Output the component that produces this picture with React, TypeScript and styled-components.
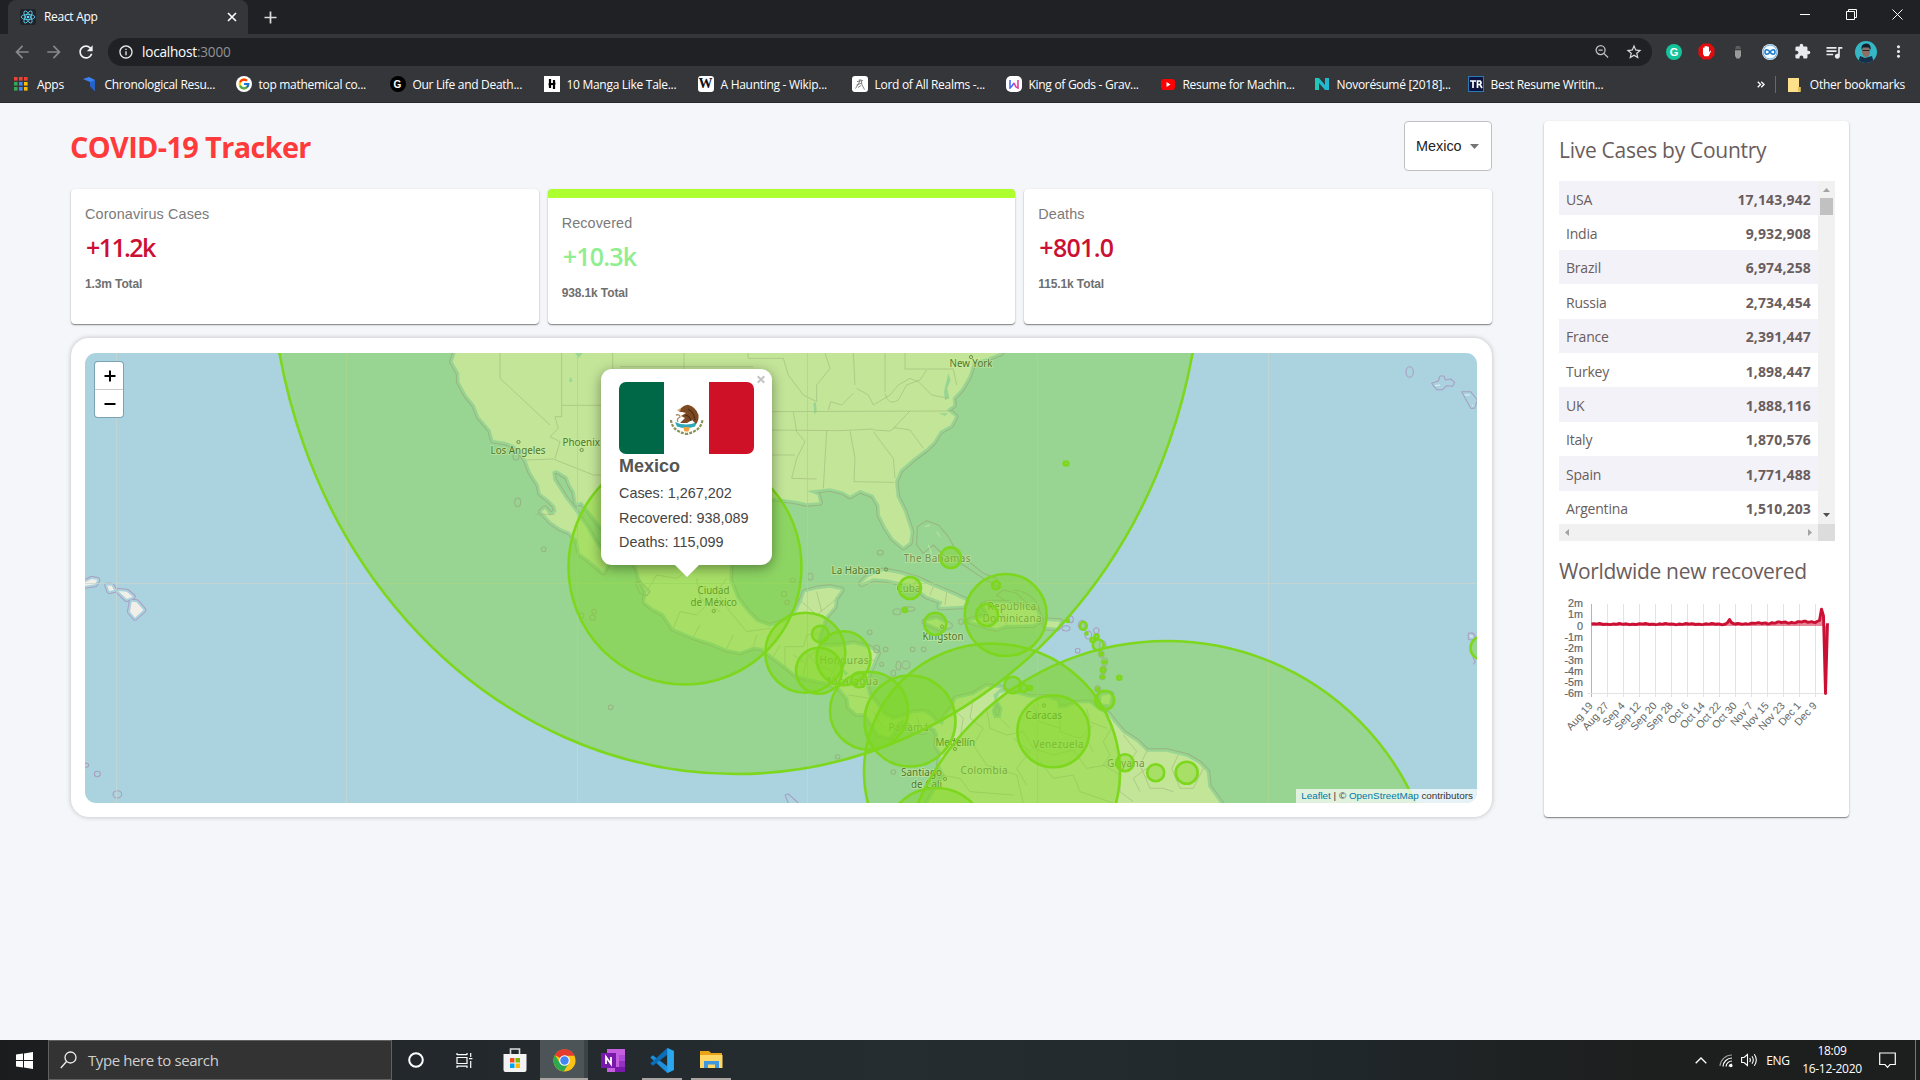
import React from "react";
import styled, { createGlobalStyle } from "styled-components";
import { MdArrowBack, MdArrowForward, MdRefresh, MdInfoOutline, MdStarBorder, MdExtension, MdQueueMusic, MdMoreVert } from "react-icons/md";
import { FcGoogle } from "react-icons/fc";

const ui = `"Open Sans", "Noto Sans", sans-serif`;
const arial = `"Liberation Sans", Arial, sans-serif`;

const Global = createGlobalStyle`
  * { box-sizing: border-box; }
  body { margin: 0; background: #f5f6fa; overflow: hidden; }
  h1, h2, h3, p { margin: 0; }
  svg { display: block; flex: none; }
`;

const Screen = styled.div`
  width: 1920px;
  height: 1080px;
  display: flex;
  flex-direction: column;
  font-family: ${ui};
  background: #f5f6fa;
`;

/* ---------- browser ---------- */
const TabStrip = styled.div`
  height: 34px;
  background: #202124;
  display: flex;
  align-items: stretch;
  padding-left: 8px;
`;
const Tab = styled.div`
  width: 240px;
  background: #35363a;
  border-radius: 8px 8px 0 0;
  display: flex;
  align-items: center;
  padding: 0 11px 0 12px;
  color: #fff;
  font-size: 12px;
  letter-spacing: -0.3px;
`;
const TabTitle = styled.span`
  flex: 1;
  margin-left: 8px;
  padding-bottom: 1px;
`;
const NewTab = styled.div`
  width: 44px;
  display: flex;
  align-items: center;
  justify-content: center;
`;
const WindowButtons = styled.div`
  margin-left: auto;
  display: flex;
  height: 28px;
`;
const WindowButton = styled.div`
  width: 46px;
  display: flex;
  align-items: center;
  justify-content: center;
`;
const Toolbar = styled.div`
  height: 35px;
  background: #35363a;
  display: flex;
  align-items: center;
  padding: 0 6px 0 6px;
`;
const Nav = styled.div<{ $on?: boolean }>`
  width: 32px;
  display: flex;
  justify-content: center;
  color: ${(p) => (p.$on ? "#f1f3f4" : "#86888a")};
`;
const UrlBar = styled.div`
  margin-left: 6px;
  width: 1544px;
  height: 28px;
  border-radius: 14px;
  background: #202124;
  display: flex;
  align-items: center;
  padding: 0 2px 0 10px;
  color: #8f9296;
  font-size: 13.6px;
  letter-spacing: -0.22px;
`;
const Url = styled.span`
  flex: 1;
  margin-left: 8px;
  b { font-weight: 400; color: #fff; }
`;
const Extensions = styled.div`
  display: flex;
  margin-left: 6px;
`;
const Slot = styled.div`
  width: 32px;
  display: flex;
  align-items: center;
  justify-content: center;
  color: #e8eaed;
`;
const Avatar = styled.div`
  width: 22px;
  height: 22px;
  border-radius: 50%;
  overflow: hidden;
`;
const Bookmarks = styled.div`
  height: 34px;
  background: #35363a;
  border-bottom: 1px solid #27282b;
  display: flex;
  align-items: center;
  color: #fff;
  font-size: 12px;
  letter-spacing: -0.29px;
  padding: 0 0 3px 14px;
`;
const AppsMark = styled.div`
  display: flex;
  align-items: center;
  gap: 9px;
  width: 67.5px;
`;
const Bookmark = styled.div`
  width: 154px;
  display: flex;
  align-items: center;
  gap: 7px;
  white-space: nowrap;
`;
const Badge = styled.div<{ $bg: string; $fg: string; $radius?: number; $family?: string; $size?: number }>`
  width: 16px;
  height: 16px;
  border-radius: ${(p) => p.$radius ?? 0}px;
  background: ${(p) => p.$bg};
  color: ${(p) => p.$fg};
  font: 700 ${(p) => p.$size ?? 10}px ${(p) => p.$family ?? arial};
  letter-spacing: 0;
  display: flex;
  align-items: center;
  justify-content: center;
`;
const OtherMarks = styled.div`
  margin-left: auto;
  margin-right: 15px;
  display: flex;
  align-items: center;
`;
const MoreMarks = styled.div`
  margin: 1px 10px 0 0;
`;
const MarkDivider = styled.div`
  width: 1px;
  height: 17px;
  background: #66686c;
  margin-right: 12px;
`;
const OtherLabel = styled.span`
  margin-left: 9px;
  letter-spacing: -0.22px;
`;

/* ---------- page ---------- */
const Page = styled.main`
  flex: 1;
  display: flex;
  align-items: flex-start;
  gap: 52px;
  padding: 18px 71px 0;
`;
const Left = styled.section`
  width: 1421px;
`;
const Header = styled.header`
  height: 50px;
  display: flex;
  justify-content: space-between;
  align-items: center;
  margin-bottom: 18px;
`;
const Title = styled.h1`
  color: #ff3a3a;
  font-size: 28.8px;
  line-height: 40px;
  font-weight: 700;
  letter-spacing: -0.6px;
  padding-top: 1px;
  margin-left: -1px;
`;
const Select = styled.div`
  width: 88px;
  height: 50px;
  border: 1px solid #c0c0c2;
  border-radius: 4px;
  background: #fff;
  display: flex;
  align-items: center;
  justify-content: space-between;
  padding: 0 12px 0 11px;
  font: 14.4px ${arial};
  color: #222;
`;
const Stats = styled.div`
  display: grid;
  grid-template-columns: repeat(3, 1fr);
  gap: 9px;
  margin-bottom: 14px;
`;
const Stat = styled.div<{ $selected?: boolean }>`
  height: 135px;
  background: #fff;
  border-radius: 4px;
  border-top: ${(p) => (p.$selected ? "9px solid greenyellow" : "0")};
  box-shadow: 0 1px 1px rgba(0, 0, 0, 0.38), 0 1px 3px rgba(0, 0, 0, 0.16);
  padding: 17px 14px;
  font-family: ${arial};
`;
const StatLabel = styled.p`
  font-size: 14.4px;
  line-height: 17px;
  letter-spacing: 0.12px;
  color: #7a7a7a;
`;
const StatValue = styled.h2<{ $green?: boolean; $track: number }>`
  font: 600 25px/34px ${ui};
  letter-spacing: ${(p) => p.$track}px;
  color: ${(p) => (p.$green ? "#90ee90" : "#cc1034")};
  margin: 7px 0 12px 1px;
`;
const StatTotal = styled.p`
  font-size: 12px;
  line-height: 16px;
  font-weight: 700;
  letter-spacing: -0.12px;
  color: #6f6f6f;
`;
const MapCard = styled.div`
  height: 479px;
  padding: 15px 15px 14px 14px;
  border-radius: 18px;
  background: #fff;
  box-shadow: 0 0 5px rgba(0, 0, 0, 0.24);
`;
const MapView = styled.div`
  position: relative;
  height: 450px;
  border-radius: 11px;
  overflow: hidden;
  background: #aad3df;
`;
const ZoomControl = styled.div`
  position: absolute;
  left: 9px;
  top: 8px;
  border: 1.5px solid rgba(90, 140, 160, 0.8);
  border-radius: 4px;
  overflow: hidden;
  background: #fff;
`;
const ZoomButton = styled.div`
  width: 28px;
  height: 27px;
  display: flex;
  align-items: center;
  justify-content: center;
  padding-left: 1px;
  & + & { border-top: 1px solid #ccc; height: 28px; }
`;
const Attribution = styled.div`
  position: absolute;
  right: 0;
  bottom: 0;
  height: 14px;
  padding: 0 4px 0 5px;
  background: rgba(255, 255, 255, 0.7);
  font: 9.9px/14px ${arial};
  color: #333;
  white-space: nowrap;
  a { color: #0078a8; }
`;
const Popup = styled.div`
  position: absolute;
  left: 516px;
  top: 16px;
  width: 171px;
  height: 196px;
  padding: 13px 18px;
  border-radius: 11px;
  background: #fff;
  box-shadow: 0 3px 13px rgba(0, 0, 0, 0.4);
  font-family: ${arial};
  color: #444;
`;
const PopupTip = styled.div`
  position: absolute;
  left: 74px;
  top: 195.5px;
  border: 12px solid transparent;
  border-top-color: #fff;
  border-bottom: 0;
`;
const PopupClose = styled.div`
  position: absolute;
  right: 7px;
  top: 6px;
`;
const Flag = styled.div`
  height: 72px;
  border-radius: 7px;
  overflow: hidden;
`;
const PopupName = styled.div`
  font-size: 18px;
  line-height: 22px;
  font-weight: 700;
  color: #555;
  margin: 1px 0 4px;
`;
const PopupLine = styled.div`
  font-size: 14.4px;
  line-height: 24.5px;
`;

const SideCard = styled.aside`
  width: 305px;
  height: 696px;
  border-radius: 4px;
  background: #fff;
  box-shadow: 0 1px 1px rgba(0, 0, 0, 0.38), 0 1px 3px rgba(0, 0, 0, 0.16);
  padding: 13px 14px 0 15px;
  color: #6a5d5d;
`;
const SideTitle = styled.h3<{ $top?: number; $bottom?: number; $track: number }>`
  font-size: 21px;
  line-height: 32px;
  font-weight: 400;
  letter-spacing: ${(p) => p.$track}px;
  margin: ${(p) => p.$top ?? 0}px 0 ${(p) => p.$bottom ?? 0}px;
`;
const Scroller = styled.div`
  display: grid;
  grid-template-columns: 259px 17px;
  grid-template-rows: 343px 17px;
`;
const Rows = styled.div`
  overflow: hidden;
`;
const Row = styled.div`
  height: 34.4px;
  padding: 2px 7px 0 7px;
  display: flex;
  align-items: center;
  justify-content: space-between;
  font-size: 14px;
  letter-spacing: -0.2px;
  &:nth-child(odd) { background: #f3f2f8; }
  b { letter-spacing: 0.15px; }
`;
const VBar = styled.div`
  background: #f1f1f1;
  display: flex;
  flex-direction: column;
  align-items: center;
  padding: 6px 0;
`;
const Thumb = styled.div`
  width: 13px;
  height: 17px;
  margin: 4px 0 auto;
  background: #c1c1c1;
`;
const HBar = styled.div`
  background: #f1f1f1;
  display: flex;
  align-items: center;
  justify-content: space-between;
  padding: 0 6px;
`;
const Corner = styled.div`
  background: #dcdcdc;
`;
const ChartBox = styled.div`
  margin-left: -15px;
`;

/* ---------- taskbar ---------- */
const Taskbar = styled.footer`
  height: 40px;
  display: flex;
  background: linear-gradient(90deg, #1b1c1d 0, #22282b 420px, #262d31 900px, #20282b 1300px, #1d1e1e 1650px);
  color: #fff;
`;
const Start = styled.div`
  width: 48px;
  display: flex;
  align-items: center;
  justify-content: center;
`;
const Search = styled.div`
  width: 344px;
  background: #333;
  border: 1px solid #606060;
  display: flex;
  align-items: center;
  padding-left: 11px;
  gap: 11px;
  font-size: 15px;
  letter-spacing: -0.4px;
  color: #cfcfcf;
`;
const Task = styled.div<{ $w?: number; $active?: boolean; $open?: boolean }>`
  width: ${(p) => p.$w ?? 49}px;
  display: flex;
  align-items: center;
  justify-content: center;
  background: ${(p) => (p.$active ? "linear-gradient(90deg, #4d5457 44px, #3c4347 44px)" : "none")};
  box-shadow: ${(p) => (p.$active || p.$open ? "inset 0 -2px #aaa5a3" : "none")};
`;
const TaskGap = styled.div<{ $w: number }>`
  width: ${(p) => p.$w}px;
`;
const Tray = styled.div`
  margin-left: auto;
  display: flex;
  align-items: center;
  font-size: 12px;
  letter-spacing: -0.3px;
`;
const TrayIcon = styled.div<{ $w: number }>`
  width: ${(p) => p.$w}px;
  display: flex;
  justify-content: center;
`;
const Clock = styled.div`
  width: 74px;
  text-align: center;
  line-height: 18px;
`;
const ShowDesktop = styled.div`
  align-self: stretch;
  width: 5px;
  border-left: 1px solid #777;
`;

/* ---------- data ---------- */
const countries: [string, string][] = [
  ["USA", "17,143,942"], ["India", "9,932,908"], ["Brazil", "6,974,258"], ["Russia", "2,734,454"], ["France", "2,391,447"],
  ["Turkey", "1,898,447"], ["UK", "1,888,116"], ["Italy", "1,870,576"], ["Spain", "1,771,488"], ["Argentina", "1,510,203"],
];

// [cx, cy, rx, ry?]
const circles: number[][] = [
  [736, 250, 465.6, 524], [685, 567, 116.5, 117.5], [1166.7, 913, 272], [992, 771.5, 128], [1005.7, 615, 41], [987, 615, 11],
  [996, 585.3, 4], [950.7, 557.7, 10.3], [910, 588, 11], [905, 610, 2], [935.3, 623.7, 11], [805.3, 652.7, 40], [820.3, 634, 8.3],
  [843.5, 658.3, 27], [819, 670.7, 23], [859, 679.7, 7.5], [869, 710.7, 39], [910, 721, 45.5], [936, 839, 51], [1053.3, 731.3, 36],
  [1012.7, 685, 8.3], [1023, 688, 4], [1030, 688, 2], [1104.7, 700.3, 9.5], [1125, 762.7, 8.5], [1155.7, 772.7, 8.5],
  [1186.7, 772.7, 11], [1066, 463.5, 2.4, 2], [1083.3, 625.8, 3.4, 4], [1068, 621, 1], [1096.5, 636.5, 2], [1086.5, 633.5, 1],
  [1092.5, 640, 2], [1098.3, 645, 5.5], [1101, 654, 1.2], [1104.5, 662, 1.2], [1103, 670, 2], [1102.5, 677, 1.2], [1097.5, 689, 1.2],
  [1119.3, 677.7, 2], [1482, 648, 11.5],
];

const mainland =
  "M-253,0 L-253,24 -262,50 -242,85 -242,110 -220,150 -196,180 -182,215 -148,255 -140,285 -105,290 -78,300 -60,318 -41,345 -28,380 -3,420 2,445 28,465 45,482 50,500 30,512 15,492 5,500 34,530 60,548 88,560 112,585 120,625 145,642 163,658 190,680 202,655 185,620 163,590 140,550 120,520 98,490 75,460 56,430 40,405 37,380 50,375 82,395 92,420 104,440 110,475 125,470 150,500 185,545 215,580 240,600 270,640 290,665 300,700 320,740 315,770 340,790 370,805 400,850 460,875 520,895 560,912 600,920 640,905 665,908 700,935 740,965 770,990 830,1005 860,1010 900,1030 925,1060 928,1085 950,1105 975,1105 1000,1140 1015,1165 1045,1175 1060,1160 1060,1142 1085,1125 1110,1135 1120,1155 1150,1160 1165,1140 1185,1150 1195,1170 1190,1200 1205,1225 1198,1260 1215,1290 1190,1330 1165,1374 1160,1400 2060,1400 2040,1374 2005,1325 2000,1280 1975,1255 1940,1235 1880,1220 1820,1220 1790,1190 1750,1165 1720,1130 1705,1110 1675,1095 1650,1075 1610,1075 1580,1088 1555,1090 1550,1070 1520,1058 1470,1058 1440,1050 1400,1040 1378,1045 1370,1062 1388,1090 1382,1118 1362,1120 1355,1098 1365,1070 1360,1050 1382,1030 1340,1025 1300,1050 1248,1062 1238,1090 1218,1112 1208,1140 1185,1130 1170,1112 1150,1102 1120,1105 1090,1118 1060,1125 1030,1110 1010,1080 985,1050 978,1020 985,985 1000,950 1012,925 985,908 940,897 900,905 850,905 832,895 835,870 850,830 860,810 882,785 885,760 903,735 870,728 830,733 795,742 785,770 770,800 740,828 690,845 650,830 620,800 590,760 568,705 570,660 575,600 600,540 640,485 700,458 730,462 770,468 800,475 838,472 832,450 800,438 870,430 910,440 930,452 960,435 1000,450 1018,480 1020,510 1040,550 1060,580 1090,605 1108,592 1112,560 1092,500 1070,455 1065,410 1080,375 1120,340 1160,310 1180,290 1200,258 1232,240 1245,215 1220,195 1240,180 1238,160 1265,130 1285,95 1300,50 1340,40 1380,24 1400,0 Z";

const islands =
  "M965,715 L985,695 1030,678 1075,686 1130,702 1180,725 1240,750 1278,768 1270,782 1200,785 1208,770 1160,752 1130,728 1080,712 1040,703 1000,700 Z M1290,828 L1330,840 1370,850 1395,840 1480,838 1500,825 1490,800 1440,785 1400,775 1350,775 1330,780 1350,810 1320,820 Z M1518,828 L1560,830 1552,848 1518,845 Z M1155,830 L1190,822 1228,842 1200,850 Z M1685,1052 L1712,1048 1708,1078 1682,1075 Z";

const hawaii =
  "M-1365,712 L-1345,702 -1328,705 -1335,718 -1365,722 Z M-1298,722 L-1285,722 -1278,735 -1292,738 Z M-1265,738 L-1240,740 -1222,755 -1240,762 Z M-1225,770 L-1210,772 -1190,795 -1215,818 -1230,800 Z";

const lines = [
  "M-120,0 L-120,100 30,240", "M65,0 L65,181 185,181 M65,181 L65,215 45,215 55,250 30,275 60,290 45,340", "M-41,345 L40,342 160,390 200,390",
  "M218,0 L218,90 M432,0 L432,75 M240,65 L640,65", "M622,0 L625,40 730,40 745,90 790,150 830,170 830,120 870,70 855,24",
  "M690,200 L1235,198 M690,255 L900,257 1000,252 M760,200 L770,260 795,290 770,340 755,400 830,402 M860,258 L850,430 M930,258 L945,340 942,410 1062,412 M1000,260 L1030,300 1060,340 1065,400",
  "M690,330 L765,330 M865,195 L872,170 905,180 940,145 M940,24 L945,120 M1035,24 L1035,140 M1095,0 L1095,72 1240,72 1250,120 M1000,255 L1050,258 1065,248 1110,255 1150,310 M950,130 L985,150 1000,180 1050,150 1075,120 1110,100 1135,110",
  "M1110,198 L1060,250 M1035,145 Q1045,185 1075,165 L1100,120 1140,105 1160,75 M1135,110 L1175,150 1225,160",
  "M320,740 L350,690 410,700 450,670 M400,850 L420,800 470,810 510,770 560,780 M470,700 L480,760 540,800 M560,700 L530,740 570,800 620,860 690,850 M460,875 L480,840 M560,912 L580,870 M640,905 L650,870 M700,935 L720,900",
  "M785,770 L830,810 885,765 M830,740 L845,800 M735,965 L735,905 790,905 800,870 835,865 M790,990 L800,940 850,900 M860,1010 L890,960 1005,945 M925,1050 L990,1060 M960,1010 L975,1030",
  "M800,920 L830,960 870,975 900,1005 M760,930 L790,950 M1090,1120 L1080,1150 M1130,1110 L1140,1150 M1000,1100 L1030,1150",
  "M1238,1090 L1270,1120 1260,1180 1210,1230 M1300,1060 L1290,1120 1330,1150 1300,1200 1340,1260 1430,1290 1450,1374 M1200,1290 L1260,1300 1290,1340 1420,1350 M1340,1090 L1350,1150 1400,1170 1450,1160 1480,1210 1540,1230 1600,1215 1640,1270 1700,1260",
  "M1420,1180 L1470,1220 1430,1270 1460,1320 M1560,1110 L1560,1160 1620,1180 1660,1140 M1640,1090 L1650,1130 1700,1150 M1380,1120 L1410,1150 M1480,1080 L1500,1130 1560,1150",
  "M1720,1140 L1690,1190 1710,1230 1690,1260 1740,1290 1740,1340 1780,1370 M1820,1220 L1800,1260 1830,1330 1870,1330 1900,1340 M1915,1230 L1895,1270 1920,1330 1960,1330 1990,1270 M1750,1170 L1790,1220 1760,1260",
  "M1800,1340 L1780,1300 1820,1270 M1500,1250 L1540,1300 1600,1290 1620,1340 1720,1374 M1640,1180 L1660,1220",
  "M1395,775 L1385,800 1400,840 M1130,702 L1120,725 M1180,725 L1170,750 M1220,742 L1215,780",
  "M-15,508 L45,508 M200,590 L250,560",
];

// [x, y, width, text, country-level]
const labels: [number, number, number, string, boolean?][] = [
  [949.5, 367, 43, "New York"], [490.5, 453.5, 55, "Los Angeles"], [562.5, 446, 37.5, "Phoenix"], [697.5, 593.5, 32, "Ciudad"], [690.5, 605.5, 46.5, "de México"],
  [831.5, 573.5, 49, "La Habana"], [903.5, 562, 67, "The Bahamas", true], [896.5, 591.5, 24, "Cuba", true], [922.5, 639.5, 41, "Kingston"],
  [987.5, 610, 48.5, "República", true], [982.5, 622, 59, "Dominicana", true], [819.5, 663.5, 49, "Honduras", true], [827, 684.5, 51, "Nicaragua", true],
  [888.5, 730.5, 40, "Panamá", true], [935.5, 745.5, 39.5, "Medellín"], [901, 776, 41, "Santiago"], [911, 787.5, 31, "de Cali"], [960.5, 773.5, 47, "Colombia", true],
  [1025.5, 718.5, 36.5, "Caracas"], [1033, 748, 50.5, "Venezuela", true], [1107, 767, 37.5, "Guyana", true],
];

const dots = [[518.5, 442], [581.7, 450], [713.7, 611], [886, 569.5], [971, 357], [942, 626.5], [1044, 705.5], [955, 749], [945, 779]];

const rings = [
  [-67, 472, 9, 13], [11, 613, 7, 7], [-72, 335, 9, 10], [162, 800, 7, 7], [158, 818, 8, 8], [125, 812, 6, 8], [212, 1087, 7, 7], [893, 1235, 7, 6],
  [732, 747, 8, 8], [741, 772, 7, 7], [758, 706, 8, 6], [811, 695, 8, 10], [989, 862, 7, 7], [1021, 623, 9, 7], [1071, 800, 12, 9], [1105, 792, 20, 7],
  [1118, 913, 7, 7], [1151, 913, 7, 7], [1037, 913, 7, 7], [1010, 912, 9, 11], [1025, 958, 6, 6], [1075, 962, 7, 13], [1098, 960, 12, 12], [1060, 1281, 7, 7],
  [1263, 830, 7, 8], [2609, 81, 11, 16], [1613, 917, 7, 7], [1578, 850, 12, 8], [1593, 823, 7, 10], [1625, 840, 10, 14],
  [1669, 857, 8, 9], [1645, 870, 10, 12], [1688, 900, 10, 12], [1684, 928, 8, 9], [1694, 950, 9, 11], [1690, 975, 9, 11], [1687, 996, 8, 8],
  [1673, 1031, 9, 9], [-1362, 1261, 8, 6], [-1328, 1287, 9, 8], [-1268, 1348, 13, 11], [1060, 985, 7, 9],
];

const lastSpike = [0.42, 0.5, 1.5, 0.9, -6, 0.25];
const chartValues: number[] = Array.from({ length: 119 }, (_, i) => {
  if (i >= 113) return lastSpike[i - 113];
  if (i === 68 || i === 70) return 0.3;
  if (i === 69) return 0.58;
  const wobble = Math.sin(i * 1.9) * 0.03 + Math.sin(i * 0.55) * 0.03;
  const base = i < 70 ? 0.17 : 0.17 + (i - 70) * 0.0052;
  return base + wobble * (i > 84 ? 1.6 : 1);
});
const chartLine = chartValues.map((v, i) => `${(47.5 + i * 2).toFixed(1)},${(39 - v * 11.25).toFixed(1)}`).join(" ");
const xTicks = ["Aug 19", "Aug 27", "Sep 4", "Sep 12", "Sep 20", "Sep 28", "Oct 6", "Oct 14", "Oct 22", "Oct 30", "Nov 7", "Nov 15", "Nov 23", "Dec 1", "Dec 9"];
const yTicks = ["2m", "1m", "0", "-1m", "-2m", "-3m", "-4m", "-5m", "-6m"];

/* ---------- drawings ---------- */
const ReactIcon = () => (
  <svg width="16" height="16" viewBox="0 0 16 16">
    <rect width="16" height="16" rx="2" fill="#20232a" />
    <g fill="none" stroke="#61dafb" strokeWidth=".8">
      {[0, 60, 120].map((a) => <ellipse key={a} cx="8" cy="8" rx="6.8" ry="2.6" transform={`rotate(${a} 8 8)`} />)}
    </g>
    <circle cx="8" cy="8" r="1.3" fill="#61dafb" />
  </svg>
);

const AppsGrid = () => (
  <svg width="14" height="14" viewBox="0 0 14 14">
    {["#ea4335", "#ea4335", "#ea4335", "#34a853", "#4285f4", "#fbbc04", "#34a853", "#4285f4", "#fbbc04"].map((c, i) => (
      <rect key={i} x={(i % 3) * 5} y={Math.floor(i / 3) * 5} width="3.6" height="3.6" fill={c} />
    ))}
  </svg>
);

const ChromeLogo = () => (
  <svg width="23" height="23" viewBox="0 0 24 24">
    <circle cx="12" cy="12" r="11.5" fill="#fbc116" />
    <path d="M12 12 L2 6.2 A11.5 11.5 0 0 1 22 6.2 L12 6.5Z" fill="#e33b2e" />
    <path d="M2 6.2 A11.5 11.5 0 0 0 11 23.4 L16.7 14.5 L12 12 L7.2 14.7Z" fill="#2da94f" />
    <path d="M2 6.2 L12 6.5 H22" fill="none" stroke="#e33b2e" strokeWidth="1.2" />
    <circle cx="12" cy="12" r="5.5" fill="#fff" />
    <circle cx="12" cy="12" r="4.4" fill="#4285f4" />
  </svg>
);

const Wifi = () => (
  <svg width="16" height="16" viewBox="0 0 16 16" fill="none" stroke="#fff" strokeWidth="1.2">
    <path d="M2 14 A12 12 0 0 1 14 3" stroke="#999" />
    <path d="M5 14.5 A9 9 0 0 1 14 6" />
    <path d="M8 14.5 A6 6 0 0 1 14 9" />
    <path d="M11 14.5 A3.5 3.5 0 0 1 14 12" />
    <circle cx="13" cy="13.6" r="1" fill="#fff" />
  </svg>
);

const MexicoFlag = () => (
  <svg width="135" height="72" viewBox="0 0 135 72">
    <rect width="135" height="72" fill="#fff" />
    <rect width="45" height="72" fill="#006847" />
    <rect x="90" width="45" height="72" fill="#ce1126" />
    <path d="M52 38 Q53 49 67.5 52 Q82 49 83.5 38" fill="none" stroke="#8b9255" strokeWidth="2.2" strokeDasharray="3 1.2" />
    <path d="M56 40 Q67 45 78 40 L76 44.5 Q67 48 58 44.5Z" fill="#30a8b8" />
    <path d="M64 45 h7 l-1.5 4.5 h-4z" fill="#f0a040" />
    <path d="M60 30 Q62 23.5 69 22.8 Q77 25 79.5 33 Q80 39 77 42 L73 38 L68 41 L61 41 L66 36 L62 34 L67 31 L63 30Z" fill="#7c4a22" />
    <path d="M69 27 Q75 30 76 38 M66 33 Q71 34 72 39" stroke="#4e2b12" strokeWidth="1.2" fill="none" />
    <path d="M57 33 Q61 32 61 35 Q57 37 59 40" stroke="#a98a5c" strokeWidth="1.3" fill="none" />
    <path d="M58 28 l4 -2 -1 4z" fill="#d5a66a" />
  </svg>
);

const WorldMap = () => (
  <svg width="1392" height="450" viewBox="85 353 1392 450">
    <g transform="translate(540 345) scale(.33333)" strokeLinejoin="round">
      <g stroke="#a99fc2" strokeWidth="21" fill="none"><path d={mainland} /><path d={islands} /><path d={hawaii} strokeWidth="18" /></g>
      <g stroke="#aad3df" strokeWidth="15" fill="#aad3df"><path d={mainland} /><path d={islands} /><path d={hawaii} strokeWidth="12" /></g>
      <g fill="#f2efe9"><path d={mainland} /><path d={islands} /><path d={hawaii} /></g>
      <g fill="#aad3df">
        <path d="M1225,85 L1232,105 1222,130 1228,160 1215,165 1212,140 1218,115Z M1195,205 L1225,205 1215,212Z M105,24 L128,24 116,38Z M90,95 L98,108 88,112Z" />
        <path d="M905,968 L925,985 915,992Z M928,1000 L955,1020 948,1028Z M820,175 L828,172 830,198 824,210Z" />
      </g>
      <g fill="none" stroke="#b7a6b8" strokeWidth="3">{lines.map((d, i) => <path key={i} d={d} opacity=".62" />)}</g>
      <g fill="none" stroke="#a99fc2" strokeWidth="3.2">
        {rings.map(([x, y, rx, ry], i) => <ellipse key={i} cx={x} cy={y} rx={rx} ry={ry} />)}
        <path d="M1130,600 L1132,545 1160,527 1195,540 1225,575 1250,620 1330,685 1370,700 1380,730 1330,700 1270,660 1210,630 1180,600 1150,625 Z" />
        <path d="M1400,770 L1370,750 1390,735 1430,745 1460,775 1500,800 M1420,735 Q1480,740 1500,795" />
        <path d="M735,1350 L745,1347 775,1374 M735,1350 L745,1374" />
        <path d="M2675,115 L2695,108 2700,93 2712,93 2716,105 2732,102 2744,112 2738,124 2720,122 2708,134 2690,134 Z M2765,140 L2792,140 2812,165 2804,190 2792,190 Z" />
        <path d="M2785,865 Q2800,860 2806,872 Q2800,890 2785,883Z M2798,935 L2806,950 2800,958" />
        <path d="M285,712 L300,708 330,740 320,752 300,745Z" />
      </g>
      <g stroke="#fff" strokeWidth="3" fill="none" opacity=".75">
        <path d="M1155,545 L1170,540 M1190,560 L1200,575 M1165,600 L1175,625 M2685,122 L2700,120 M2774,150 L2790,150 M2796,180 L2800,183 M2790,872 L2798,876" />
      </g>
    </g>
    <g stroke="#c9d6cf" strokeWidth="1" opacity=".75">
      {[116.5, 346.5, 577.5, 807.5, 1037.5, 1268.5].map((x) => <line key={x} x1={x} x2={x} y1="353" y2="803" />)}
      <line x1="85" x2="1477" y1="583.5" y2="583.5" />
    </g>
    <g fontFamily={`"Noto Sans", "Open Sans", sans-serif`} fontSize="10" stroke="#fff" strokeOpacity=".55" strokeWidth="2" paintOrder="stroke" strokeLinejoin="round">
      {labels.map(([x, y, w, t, country]) => (
        <text key={t} x={x} y={y} textLength={w} lengthAdjust={country ? "spacing" : "spacingAndGlyphs"} fill={country ? "#765a72" : "#333"}>{t}</text>
      ))}
    </g>
    <g fill="none" stroke="#555" strokeWidth=".9">{dots.map(([x, y], i) => <circle key={i} cx={x} cy={y} r="1.6" />)}</g>
    <g fill="#7dd71d" fillOpacity=".4" stroke="#7dd71d" strokeWidth="2.6">
      {circles.map(([x, y, rx, ry], i) => <ellipse key={i} cx={x} cy={y} rx={rx} ry={ry ?? rx} />)}
    </g>
  </svg>
);

const Chart = () => (
  <svg width="305" height="180" viewBox="0 0 305 180" fontFamily={arial} fill="#666">
    <g strokeWidth="1">
      {xTicks.map((t, i) => <line key={t} x1={47.5 + i * 16} x2={47.5 + i * 16} y1="17" y2="110" stroke={i ? "#e3e3e3" : "#b5b5b5"} />)}
      <line x1="43" x2="284" y1="106.5" y2="106.5" stroke="#e3e3e3" />
    </g>
    <polygon points={`47.5,39 ${chartLine} 283.5,39`} fill="#cc1034" fillOpacity=".5" />
    <polyline points={chartLine} fill="none" stroke="#cc1034" strokeWidth="2.9" strokeLinejoin="round" />
    <g fontSize="10.8" textAnchor="end" stroke="#666" strokeWidth=".2">
      {yTicks.map((t, i) => <text key={t} x="39" y={20 + i * 11.3}>{t}</text>)}
      {xTicks.map((t, i) => <text key={t} fontSize="10.6" strokeWidth="0" transform={`translate(${49.5 + i * 16} 119) rotate(-48)`}>{t}</text>)}
    </g>
  </svg>
);

const Arrow = ({ d, c }: { d: string; c: string }) => (
  <svg width="7" height="7" viewBox="0 0 7 7"><path d={d} fill={c} /></svg>
);

const marks: [React.ReactNode, string][] = [
  [<svg width="16" height="16" viewBox="0 0 16 16"><path d="M1 3 L7 1 L13 4 V15 L8 10 V6 L1 3Z" fill="#3b82f6" /><path d="M8 6 L13 4 V15 L8 10Z" fill="#2563c9" /></svg>, "Chronological Resu..."],
  [<svg width="16" height="16" viewBox="0 0 16 16"><circle cx="8" cy="8" r="8" fill="#fff" /><g transform="translate(1.5 1.5)"><FcGoogle size={13} /></g></svg>, "top mathemical co..."],
  [<Badge $bg="#000" $fg="#fff" $radius={8}>G</Badge>, "Our Life and Death..."],
  [<Badge $bg="#fff" $fg="#000"><svg width="10" height="12" viewBox="0 0 10 12" stroke="#000" strokeWidth="2.2"><path d="M3 1 V10 M7 2 V11 M1.5 6.5 L8.5 5.5" /></svg></Badge>, "10 Manga Like Tale..."],
  [<Badge $bg="#fff" $fg="#111" $radius={3} $size={14} $family={`"Liberation Serif", serif`}>W</Badge>, "A Haunting - Wikip..."],
  [<Badge $bg="#fff" $fg="#666" $radius={3}><svg width="12" height="12" viewBox="0 0 12 12" fill="none" stroke="#777" strokeWidth=".9"><path d="M3 3.5 L9 2.5 M6 1 L5 5 L1.5 10.5 M2.5 7 L8 5 M7 1.5 L8 7 L10.5 11.5 M4 9.5 L7 7.5" /></svg></Badge>, "Lord of All Realms -..."],
  [<Badge $bg="#fff" $fg="#5b5bf0" $radius={5}><svg width="10" height="9" viewBox="0 0 10 9" fill="none" strokeWidth="1.6"><path d="M1 0 V8 L3 6 L5 3" stroke="#4b6bff" /><path d="M5 3 L7 7 L9 8 V0" stroke="#e0409a" /></svg></Badge>, "King of Gods - Grav..."],
  [<svg width="16" height="16" viewBox="0 0 16 16"><rect x="1" y="3" width="14" height="11" rx="3" fill="#f00" /><path d="M6.5 6 L10.5 8.5 L6.5 11Z" fill="#fff" /></svg>, "Resume for Machin..."],
  [<svg width="16" height="16" viewBox="0 0 16 16"><path d="M1 2 H5 L11 9 V2 H15 V14 H11 L5 7 V14 H1Z" fill="#22b8cf" /><path d="M1 2 H5 V14 H1Z" fill="#1fc7b6" /></svg>, "Novorésumé [2018]..."],
  [<svg width="16" height="16" viewBox="0 0 16 16"><rect x=".5" y=".5" width="15" height="15" fill="#0d1440" stroke="#2a7ab8" /><path d="M2 5 H8 M5 5 V12 M9.5 12 V5 H12 Q14 6.5 12 8.5 H10 M12 8.5 L14 12" fill="none" stroke="#fff" strokeWidth="1.7" /></svg>, "Best Resume Writin..."],
];

export default function App() {
  return (
    <Screen>
      <Global />
      <TabStrip>
        <Tab>
          <ReactIcon />
          <TabTitle>React App</TabTitle>
          <svg width="10" height="10" viewBox="0 0 10 10" stroke="#fff" strokeWidth="1.6"><path d="M1 1 L9 9 M9 1 L1 9" /></svg>
        </Tab>
        <NewTab><svg width="13" height="13" viewBox="0 0 13 13" stroke="#dcdcdc" strokeWidth="1.7"><path d="M6.5 0.5 V12.5 M.5 6.5 H12.5" /></svg></NewTab>
        <WindowButtons>
          <WindowButton><svg width="10" height="10" viewBox="0 0 10 10" stroke="#fff"><path d="M0 5.5 H10" /></svg></WindowButton>
          <WindowButton><svg width="11" height="11" viewBox="0 0 11 11" stroke="#fff" fill="none"><path d="M.5 2.5 H8.5 V10.5 H.5Z M2.5 2.5 V.5 H10.5 V8.5 H8.5" /></svg></WindowButton>
          <WindowButton><svg width="11" height="11" viewBox="0 0 11 11" stroke="#fff"><path d="M.5 .5 L10.5 10.5 M10.5 .5 L.5 10.5" /></svg></WindowButton>
        </WindowButtons>
      </TabStrip>
      <Toolbar>
        <Nav><MdArrowBack size={20} /></Nav>
        <Nav><MdArrowForward size={20} /></Nav>
        <Nav $on><MdRefresh size={20} /></Nav>
        <UrlBar>
          <MdInfoOutline size={16} color="#e8eaed" />
          <Url><b>localhost</b>:3000</Url>
          <Slot>
            <svg width="14" height="15" viewBox="0 0 15 15" fill="none" stroke="#bdc1c6" strokeWidth="1.4"><circle cx="6" cy="6" r="4.8" /><path d="M9.5 9.5 L14 14 M3.8 6 H8.2" /></svg>
          </Slot>
          <Slot><MdStarBorder size={18} color="#dadce0" /></Slot>
        </UrlBar>
        <Extensions>
          <Slot><Badge $bg="#15c39a" $fg="#fff" $radius={8} $size={11}>G</Badge></Slot>
          <Slot>
            <svg width="17" height="17" viewBox="0 0 17 17"><path d="M5 .5 H12 L16.5 5 V12 L12 16.5 H5 L.5 12 V5Z" fill="#e30b0b" /><path d="M5 9 V5 Q6 4 6.5 5 V3.5 Q7.5 2.7 8 3.5 Q9 2.5 9.6 3.7 Q10.8 3.3 11 4.5 V9 L12.6 7.5 Q13.2 8 12.8 8.8 L10.6 13.3 H6.4 L5 11Z" fill="#fff" /></svg>
          </Slot>
          <Slot><svg width="10" height="16" viewBox="0 0 10 16"><path d="M3 2 H7 L8 5.3 H2Z" fill="#5c5d60" /><path d="M2 6.3 H8 V12 L6.5 14.5 H3.5 L2 12Z" fill="#9a9a9a" /></svg></Slot>
          <Slot>
            <svg width="16" height="16" viewBox="0 0 16 16"><circle cx="8" cy="8" r="8" fill="#fff" /><circle cx="8" cy="8" r="7" fill="#f3faff" stroke="#1c7fd0" strokeWidth=".7" /><path d="M8 8 C6 5 3 5 3 8 S6 11 8 8 S13 5 13 8 S10 11 8 8Z" fill="none" stroke="#1678cc" strokeWidth="1.5" /></svg>
          </Slot>
          <Slot><MdExtension size={17} /></Slot>
          <Slot><MdQueueMusic size={20} /></Slot>
          <Slot>
            <Avatar>
              <svg width="22" height="22" viewBox="0 0 22 22"><rect width="22" height="22" fill="#35b6c4" /><path d="M3 22 L5 15 L10 17 L17 15 L19 22Z" fill="#17304a" /><ellipse cx="11" cy="10.5" rx="4" ry="5.5" fill="#8d6f63" /><path d="M6.5 9 Q5.5 2.5 11.5 2.5 Q16.5 3 15.5 9 L13.5 6.5 L8 6.5Z" fill="#15202e" /><path d="M7.5 9.5 H14.5" stroke="#1d2430" strokeWidth="1.2" /></svg>
            </Avatar>
          </Slot>
          <Slot><MdMoreVert size={19} /></Slot>
        </Extensions>
      </Toolbar>
      <Bookmarks>
        <AppsMark><AppsGrid />Apps</AppsMark>
        {marks.map(([icon, text]) => <Bookmark key={text}>{icon}{text}</Bookmark>)}
        <OtherMarks>
          <MoreMarks><svg width="8" height="7" viewBox="0 0 9 8" fill="none" stroke="#fff" strokeWidth="1.5"><path d="M.8 .8 L4 4 L.8 7.2 M4.8 .8 L8 4 L4.8 7.2" /></svg></MoreMarks>
          <MarkDivider />
          <svg width="13" height="15" viewBox="0 0 13 15"><path d="M0 1 H11 V10 H12.5 V15 H0Z" fill="#ffe08a" /><path d="M0 14.5 H12.5 V10 H10 V14.5" fill="#e8bd4c" /></svg>
          <OtherLabel>Other bookmarks</OtherLabel>
        </OtherMarks>
      </Bookmarks>

      <Page>
        <Left>
          <Header>
            <Title>COVID-19 Tracker</Title>
            <Select>Mexico<svg width="9" height="5" viewBox="0 0 9 5"><path d="M0 0 H9 L4.5 5Z" fill="#757575" /></svg></Select>
          </Header>
          <Stats>
            <Stat><StatLabel>Coronavirus Cases</StatLabel><StatValue $track={-1.6}>+11.2k</StatValue><StatTotal>1.3m Total</StatTotal></Stat>
            <Stat $selected><StatLabel>Recovered</StatLabel><StatValue $green $track={-0.8}>+10.3k</StatValue><StatTotal>938.1k Total</StatTotal></Stat>
            <Stat><StatLabel>Deaths</StatLabel><StatValue $track={-0.7}>+801.0</StatValue><StatTotal>115.1k Total</StatTotal></Stat>
          </Stats>
          <MapCard>
            <MapView>
              <WorldMap />
              <ZoomControl>
                <ZoomButton><svg width="12" height="12" viewBox="0 0 12 12" stroke="#000" strokeWidth="2"><path d="M6 0.5 V11.5 M.5 6 H11.5" /></svg></ZoomButton>
                <ZoomButton><svg width="12" height="12" viewBox="0 0 12 12" stroke="#000" strokeWidth="2"><path d="M.5 6 H11.5" /></svg></ZoomButton>
              </ZoomControl>
              <Popup>
                <Flag><MexicoFlag /></Flag>
                <PopupName>Mexico</PopupName>
                <PopupLine>Cases: 1,267,202</PopupLine>
                <PopupLine>Recovered: 938,089</PopupLine>
                <PopupLine>Deaths: 115,099</PopupLine>
                <PopupClose><svg width="8" height="9" viewBox="0 0 8 9" stroke="#c3c3c3" strokeWidth="2"><path d="M.7 1.2 L7.3 7.8 M7.3 1.2 L.7 7.8" /></svg></PopupClose>
                <PopupTip />
              </Popup>
              <Attribution><a>Leaflet</a> | © <a>OpenStreetMap</a> contributors</Attribution>
            </MapView>
          </MapCard>
        </Left>

        <SideCard>
          <SideTitle $bottom={15} $track={-0.28}>Live Cases by Country</SideTitle>
          <Scroller>
            <Rows>{countries.map(([n, v]) => <Row key={n}><span>{n}</span><b>{v}</b></Row>)}</Rows>
            <VBar>
              <Arrow d="M0 5 L3.5 1 L7 5Z" c="#a3a3a3" />
              <Thumb />
              <Arrow d="M0 2 L3.5 6 L7 2Z" c="#505050" />
            </VBar>
            <HBar><Arrow d="M4 0 L0 3.5 L4 7Z" c="#a3a3a3" /><Arrow d="M3 0 L7 3.5 L3 7Z" c="#a3a3a3" /></HBar>
            <Corner />
          </Scroller>
          <SideTitle $top={14} $track={-0.33}>Worldwide new recovered</SideTitle>
          <ChartBox><Chart /></ChartBox>
        </SideCard>
      </Page>

      <Taskbar>
        <Start>
          <svg width="17" height="17" viewBox="0 0 17 17" fill="#fff"><path d="M0 2.5 L7 1.5 V8 H0Z M8 1.4 L17 0 V8 H8Z M0 9 H7 V15.5 L0 14.5Z M8 9 H17 V17 L8 15.6Z" /></svg>
        </Start>
        <Search>
          <svg width="17" height="18" viewBox="0 0 17 18" fill="none" stroke="#eee" strokeWidth="1.3"><circle cx="10.5" cy="6.5" r="5.5" /><path d="M6.5 10.5 L.8 17" /></svg>
          Type here to search
        </Search>
        <Task $w={48}><svg width="18" height="18" viewBox="0 0 18 18"><circle cx="9" cy="9" r="6.8" fill="none" stroke="#fff" strokeWidth="2" /></svg></Task>
        <Task $w={48}>
          <svg width="17" height="17" viewBox="0 0 17 17" fill="none" stroke="#fff" strokeWidth="1.2"><path d="M1 5.5 H11 V11.5 H1Z M1 3 V1 M11 3 V1 M1 2.7 H11 M1 16 V14.2 H11 V16 M14.7 1 V5 M14.7 9 V16 M13 6.7 H16.4" /></svg>
        </Task>
        <TaskGap $w={2} />
        <Task $w={50}>
          <svg width="24" height="26" viewBox="0 0 24 26"><path d="M7.5 8 V2 H16.5 V8" fill="none" stroke="#ddd" strokeWidth="1.6" /><path d="M.5 7 H23.5 V23 Q23.5 25 21.5 25 H2.5 Q.5 25 .5 23Z" fill="#f3f3f3" /><rect x="7" y="11" width="4.5" height="4.5" fill="#f25022" /><rect x="12.5" y="11" width="4.5" height="4.5" fill="#7fba00" /><rect x="7" y="16.5" width="4.5" height="4.5" fill="#00a4ef" /><rect x="12.5" y="16.5" width="4.5" height="4.5" fill="#ffb900" /></svg>
        </Task>
        <Task $w={48} $active><ChromeLogo /></Task>
        <Task $w={50}>
          <svg width="24" height="23" viewBox="0 0 24 23"><rect x="6" y="0" width="18" height="23" fill="#c65ee0" /><rect x="18" y="6" width="6" height="6" fill="#ae4bd5" /><rect x="18" y="12" width="6" height="6" fill="#9332bf" /><rect x="14" y="18" width="10" height="5" fill="#7719aa" /><rect x="0" y="4" width="15" height="15" fill="#7719aa" /><path d="M5 15 V8 L10 15 V8" fill="none" stroke="#fff" strokeWidth="1.8" /></svg>
        </Task>
        <TaskGap $w={4} />
        <Task $w={40} $open>
          <svg width="25" height="25" viewBox="0.7 0 25 25"><path d="M18 0 L24.5 3 V22 L18 25 L1 9.5 L3.5 7.2 L18 18.3Z" fill="#1c8fdd" /><path d="M18 0 L1 15.5 L3.5 17.8 L18 6.7Z" fill="#0a6fb8" /><path d="M18 0 L24.5 3 V22 L18 25Z" fill="#2ba7f0" /></svg>
        </Task>
        <TaskGap $w={9} />
        <Task $w={40} $open>
          <svg width="23" height="20" viewBox="0 0 23 20"><path d="M0 1 H9 L11 3 H22 V18 H0Z" fill="#e8a317" /><path d="M0 5 H22.5 V18 H0Z" fill="#ffd766" /><path d="M4 18 V11 H19 V18 H15 V14.5 H8 V18Z" fill="#3f97dd" /></svg>
        </Task>
        <Tray>
          <TrayIcon $w={26}><svg width="12" height="7" viewBox="0 0 12 7" fill="none" stroke="#fff" strokeWidth="1.3"><path d="M.7 6.3 L6 1 L11.3 6.3" /></svg></TrayIcon>
          <TrayIcon $w={24}><Wifi /></TrayIcon>
          <TrayIcon $w={23}><svg width="17" height="14" viewBox="0 0 17 14" fill="none" stroke="#fff" strokeWidth="1.1"><path d="M.6 4.5 H3 L6.5 1.5 V12.5 L3 9.5 H.6Z M8.7 5 Q10 7 8.7 9 M11 3.2 Q13.6 7 11 10.8 M13.3 1.3 Q17.3 7 13.3 12.7" /></svg></TrayIcon>
          <TrayIcon $w={34}>ENG</TrayIcon>
          <Clock>18:09<br />16-12-2020</Clock>
          <TaskGap $w={5} />
          <TrayIcon $w={26}><svg width="17" height="17" viewBox="0 0 17 17" fill="none" stroke="#fff" strokeWidth="1.2"><path d="M.7 1 H16.3 V12.5 H11 L8.5 15.3 L6 12.5 H.7Z" /></svg></TrayIcon>
          <TaskGap $w={15} />
          <ShowDesktop />
        </Tray>
      </Taskbar>
    </Screen>
  );
}
